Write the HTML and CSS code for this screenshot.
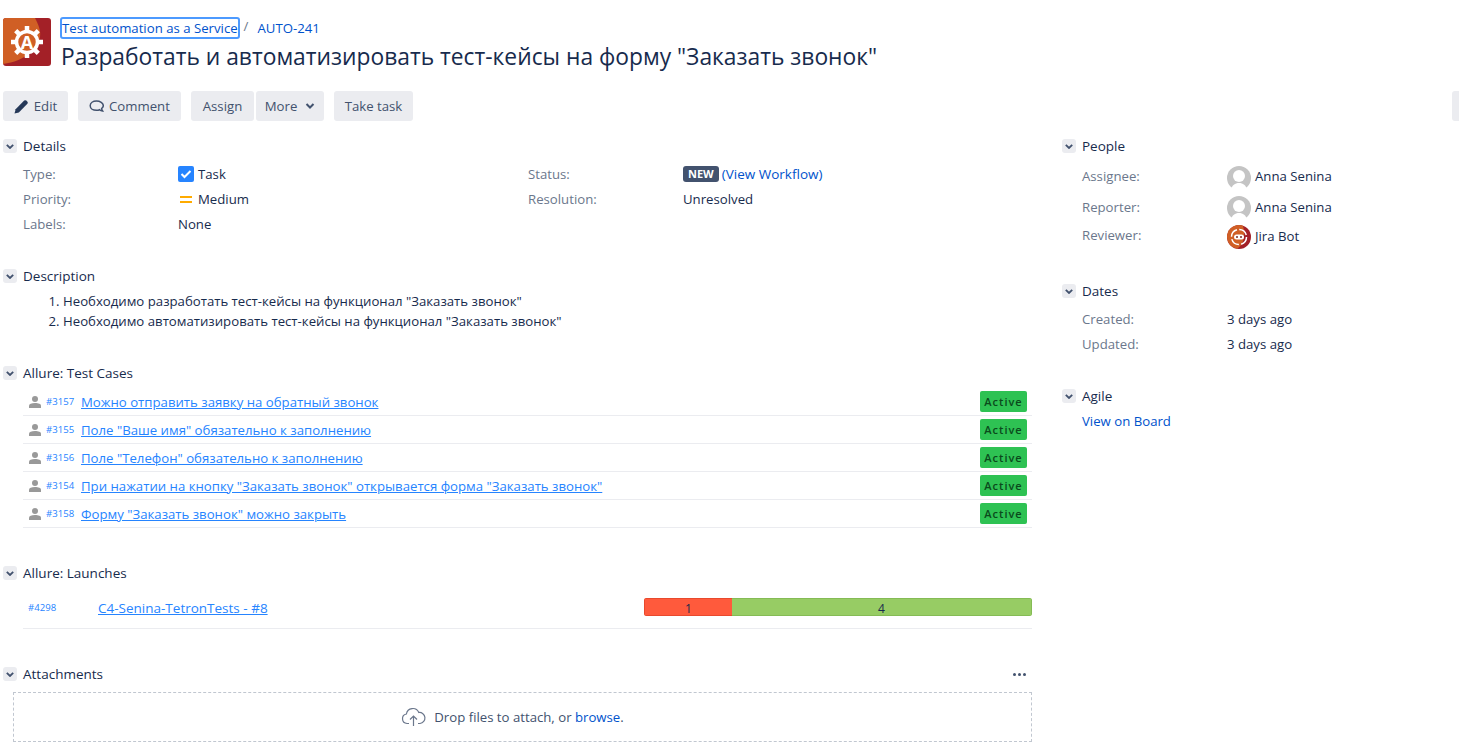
FILE: index.html
```html
<!DOCTYPE html>
<html lang="ru">
<head>
<meta charset="utf-8">
<title>AUTO-241</title>
<link rel="stylesheet" href="styles.css">
</head>
<body>
<header class="issue-header">
  <svg class="project-logo" viewBox="0 0 48 48" width="48" height="48">
    <rect width="48" height="48" rx="3" fill="#a32027"/>
    <path d="M0 3a3 3 0 0 1 3-3h29c3 6 6 12 5 19-2 12-15 24-37 27z" fill="#d05f25"/>
    <g fill="none" stroke="#fff">
      <circle cx="24" cy="24" r="10.500" stroke-width="3.500"/>
      <path stroke-width="4.500" d="M24 8v5M24 35v5M8 24h5M35 24h5M12.700 12.700l3.500 3.500M31.800 31.800l3.500 3.500M12.700 35.300l3.500-3.500M31.800 16.200l3.500-3.500"/>
    </g>
    <text x="24" y="30.500" class="logo-letter">A</text>
  </svg>
  <div class="header-text">
    <nav class="crumbs">
      <a class="crumb-focus">Test automation as a Service</a>
      <span class="crumb-sep">/</span>
      <a class="crumb-key">AUTO-241</a>
    </nav>
    <h1>Разработать и автоматизировать тест-кейсы на форму "Заказать звонок"</h1>
  </div>
</header>

<div class="toolbar">
  <button class="btn btn-edit"><svg width="15" height="15" viewBox="0 0 14 14"><path d="M0.500 13.500l1-4L9.500 1.500a1.500 1.500 0 0 1 2 0l1 1a1.500 1.500 0 0 1 0 2L4.500 12.500z" fill="#253858"/></svg>Edit</button>
  <button class="btn btn-comment"><svg width="15" height="14" viewBox="0 0 15 14"><path d="M7.500 2C4 2 1.200 3.900 1.200 6.700s2.800 4.600 6.300 4.600c1.200 0 2.200-.2 3.100-.6.800.8 1.700 1.200 3 1.300-.6-.8-.9-1.500-1-2.500 1-.8 1.700-1.700 1.700-2.800C14.300 3.900 11 2 7.500 2z" fill="none" stroke="#42526e" stroke-width="1.500"/></svg>Comment</button>
  <div class="btn-group">
    <button class="btn btn-assign">Assign</button>
    <button class="btn btn-more">More<svg width="10" height="6" viewBox="0 0 10 6"><path d="M1.500 1L5 4.500 8.500 1" fill="none" stroke="#42526e" stroke-width="2"/></svg></button>
  </div>
  <button class="btn btn-take">Take task</button>
  <span class="toolbar-edge"></span>
</div>

<main class="columns">
  <div class="col-main">
    <section class="module mod-details">
      <h2 class="mod-head"><span class="toggle"><svg width="8" height="5" viewBox="0 0 8 5"><path d="M.8.800L4 4 7.200.8" fill="none" stroke="#42526e" stroke-width="1.800"/></svg></span>Details</h2>
      <div class="details-grid">
        <span class="lbl">Type:</span><span class="val"><svg class="ico-task" width="16" height="16" viewBox="0 0 16 16"><rect width="16" height="16" rx="2" fill="#2684ff"/><path d="M3.500 8l3 3 6-6" fill="none" stroke="#fff" stroke-width="2"/></svg>Task</span>
        <span class="lbl">Status:</span><span class="val"><b class="lozenge">NEW</b> <a class="link workflow">(View Workflow)</a></span>
        <span class="lbl">Priority:</span><span class="val"><svg class="ico-task" width="16" height="16" viewBox="0 0 16 16"><path d="M2 5h12v2H2zM2 10h12v2H2z" fill="#ffab00"/></svg>Medium</span>
        <span class="lbl">Resolution:</span><span class="val">Unresolved</span>
        <span class="lbl">Labels:</span><span class="val">None</span>
      </div>
    </section>

    <section class="module mod-desc">
      <h2 class="mod-head"><span class="toggle"><svg width="8" height="5" viewBox="0 0 8 5"><path d="M.8.800L4 4 7.200.8" fill="none" stroke="#42526e" stroke-width="1.800"/></svg></span>Description</h2>
      <ol class="desc-list">
        <li>Необходимо разработать тест-кейсы на функционал "Заказать звонок"</li>
        <li>Необходимо автоматизировать тест-кейсы на функционал "Заказать звонок"</li>
      </ol>
    </section>

    <section class="module mod-cases">
      <h2 class="mod-head"><span class="toggle"><svg width="8" height="5" viewBox="0 0 8 5"><path d="M.8.800L4 4 7.200.8" fill="none" stroke="#42526e" stroke-width="1.800"/></svg></span>Allure: Test Cases</h2>
      <ul class="cases">
        <li class="case"><svg class="person" width="12" height="12" viewBox="0 0 12 12"><circle cx="6" cy="3" r="3" fill="#999"/><path d="M0 12V9.500C0 8 2.500 7 6 7s6 1 6 2.500V12z" fill="#999"/></svg><span class="case-id">#3157</span><a class="case-link">Можно отправить заявку на обратный звонок</a><span class="badge">Active</span></li>
        <li class="case"><svg class="person" width="12" height="12" viewBox="0 0 12 12"><circle cx="6" cy="3" r="3" fill="#999"/><path d="M0 12V9.500C0 8 2.500 7 6 7s6 1 6 2.500V12z" fill="#999"/></svg><span class="case-id">#3155</span><a class="case-link">Поле "Ваше имя" обязательно к заполнению</a><span class="badge">Active</span></li>
        <li class="case"><svg class="person" width="12" height="12" viewBox="0 0 12 12"><circle cx="6" cy="3" r="3" fill="#999"/><path d="M0 12V9.500C0 8 2.500 7 6 7s6 1 6 2.500V12z" fill="#999"/></svg><span class="case-id">#3156</span><a class="case-link">Поле "Телефон" обязательно к заполнению</a><span class="badge">Active</span></li>
        <li class="case"><svg class="person" width="12" height="12" viewBox="0 0 12 12"><circle cx="6" cy="3" r="3" fill="#999"/><path d="M0 12V9.500C0 8 2.500 7 6 7s6 1 6 2.500V12z" fill="#999"/></svg><span class="case-id">#3154</span><a class="case-link">При нажатии на кнопку "Заказать звонок" открывается форма "Заказать звонок"</a><span class="badge">Active</span></li>
        <li class="case"><svg class="person" width="12" height="12" viewBox="0 0 12 12"><circle cx="6" cy="3" r="3" fill="#999"/><path d="M0 12V9.500C0 8 2.500 7 6 7s6 1 6 2.500V12z" fill="#999"/></svg><span class="case-id">#3158</span><a class="case-link">Форму "Заказать звонок" можно закрыть</a><span class="badge">Active</span></li>
      </ul>
    </section>

    <section class="module mod-launches">
      <h2 class="mod-head"><span class="toggle"><svg width="8" height="5" viewBox="0 0 8 5"><path d="M.8.800L4 4 7.200.8" fill="none" stroke="#42526e" stroke-width="1.800"/></svg></span>Allure: Launches</h2>
      <div class="launch">
        <span class="launch-id">#4298</span>
        <a class="launch-link">C4-Senina-TetronTests - #8</a>
        <div class="launch-bar"><span class="bar-fail">1</span><span class="bar-pass">4</span></div>
      </div>
    </section>

    <section class="module mod-attach">
      <h2 class="mod-head"><span class="toggle"><svg width="8" height="5" viewBox="0 0 8 5"><path d="M.8.800L4 4 7.200.8" fill="none" stroke="#42526e" stroke-width="1.800"/></svg></span>Attachments<span class="dots"><i></i><i></i><i></i></span></h2>
      <div class="dropzone"><svg width="25" height="20" viewBox="0 0 25 20"><path d="M8 16.500H6a4.800 4.800 0 0 1-.6-9.500A6.500 6.500 0 0 1 17.800 5.500 5.500 5.500 0 0 1 19 16.500h-2" fill="none" stroke="#6b778c" stroke-width="1.200"/><path d="M12.500 19V9M9 12.500l3.500-3.500 3.500 3.500" fill="none" stroke="#6b778c" stroke-width="1.200"/></svg><span>Drop files to attach, or <a class="link">browse</a>.</span></div>
    </section>
  </div>

  <aside class="col-side">
    <section class="module mod-people">
      <h2 class="mod-head"><span class="toggle"><svg width="8" height="5" viewBox="0 0 8 5"><path d="M.8.800L4 4 7.200.8" fill="none" stroke="#42526e" stroke-width="1.800"/></svg></span>People</h2>
      <div class="side-row row-assignee"><span class="side-lbl">Assignee:</span><span class="side-user"><svg class="avatar" width="24" height="24" viewBox="0 0 24 24"><circle cx="12" cy="12" r="12" fill="#c4c4c4"/><circle cx="12" cy="10" r="6" fill="#fff"/><path d="M4 24c1-5 4-7 8-7s7 2 8 7z" fill="#fff"/></svg>Anna Senina</span></div>
      <div class="side-row row-reporter"><span class="side-lbl">Reporter:</span><span class="side-user"><svg class="avatar" width="24" height="24" viewBox="0 0 24 24"><circle cx="12" cy="12" r="12" fill="#c4c4c4"/><circle cx="12" cy="10" r="6" fill="#fff"/><path d="M4 24c1-5 4-7 8-7s7 2 8 7z" fill="#fff"/></svg>Anna Senina</span></div>
      <div class="side-row row-reviewer"><span class="side-lbl">Reviewer:</span><span class="side-user"><svg class="avatar" width="24" height="24" viewBox="0 0 24 24"><circle cx="12" cy="12" r="12" fill="#a32027"/><path d="M12 0a12 12 0 0 0-12 12 12 12 0 0 0 10 11.800C16 20 19 12 16 .7A12 12 0 0 0 12 0z" fill="#d05f25"/><circle cx="12" cy="12" r="7.500" fill="none" stroke="#fff" stroke-width="1.500" stroke-dasharray="9.500 2.280"/><rect x="7" y="9.500" width="10" height="5" rx="2.500" fill="#fff"/><circle cx="10" cy="12" r="1" fill="#7a2a20"/><circle cx="14" cy="12" r="1" fill="#7a2a20"/></svg>Jira Bot</span></div>
    </section>
    <section class="module mod-dates">
      <h2 class="mod-head"><span class="toggle"><svg width="8" height="5" viewBox="0 0 8 5"><path d="M.8.800L4 4 7.200.8" fill="none" stroke="#42526e" stroke-width="1.800"/></svg></span>Dates</h2>
      <div class="side-row date-row"><span class="side-lbl">Created:</span><span class="side-val">3 days ago</span></div>
      <div class="side-row date-row"><span class="side-lbl">Updated:</span><span class="side-val">3 days ago</span></div>
    </section>
    <section class="module mod-agile">
      <h2 class="mod-head"><span class="toggle"><svg width="8" height="5" viewBox="0 0 8 5"><path d="M.8.800L4 4 7.200.8" fill="none" stroke="#42526e" stroke-width="1.800"/></svg></span>Agile</h2>
      <a class="link agile-link">View on Board</a>
    </section>
  </aside>
</main>
</body>
</html>
```
FILE: styles.css
```css
* { box-sizing: border-box; }
html, body { margin: 0; padding: 0; height: 755px; overflow: hidden; }
body {
  background: #fff;
  color: #172b4d;
  font-family: "Open Sans", "Noto Sans", sans-serif;
  font-size: 13.2px;
  line-height: 20px;
}
a { color: #0052cc; text-decoration: none; }
.link { color: #0052cc; }

.issue-header { display: flex; padding: 18px 0 0 3px; height: 91px; }
.project-logo { flex: none; }
.logo-letter { font: bold 18px "Open Sans", sans-serif; fill: #fff; text-anchor: middle; }
.header-text { margin-left: 10px; margin-top: -1px; }
.crumbs { display: flex; align-items: center; height: 22px; margin-left: -1px; }
.crumb-focus { border: 2px solid #4c9aff; border-radius: 3px; height: 22px; line-height: 18px; }
.crumb-sep { color: #6b778c; margin: -4px 9px 0 4px; }
h1 { margin: 2px 0 0; font-size: 22.8px; line-height: 32px; font-weight: 500; color: #172b4d; white-space: nowrap; }

.toolbar { display: flex; height: 30px; position: relative; padding-left: 3px; }
.btn {
  display: flex; align-items: center; justify-content: center;
  height: 30px; border: 0; padding: 0; border-radius: 3px;
  background: #ebecf0; color: #42526e;
  font: inherit;
}
.btn-edit { width: 65px; gap: 5px; margin-right: 10px; }
.btn-comment { width: 103px; gap: 5px; margin-right: 10px; }
.btn-group { display: flex; gap: 2px; margin-right: 10px; }
.btn-assign { width: 63px; }
.btn-more { width: 68px; gap: 8px; }
.btn-take { width: 79px; }
.toolbar-edge { position: absolute; right: 0; top: 0; width: 7px; height: 30px; background: #ebecf0; border-radius: 3px 0 0 3px; }

.columns { display: flex; padding-left: 3px; }
.col-main { width: 1029px; flex: none; }
.col-side { margin-left: 30px; width: 300px; flex: none; }

.module { position: relative; }
.mod-head {
  display: flex; align-items: center; margin: 0; height: 20px;
  font-size: 13.5px; font-weight: 500; color: #172b4d; line-height: 20px;
}
.toggle {
  display: flex; align-items: center; justify-content: center;
  flex: none; width: 14px; height: 14px; margin-right: 6px;
  background: #ebecf0; border-radius: 3px;
}

.mod-details { padding-top: 15px; }
.details-grid {
  display: grid; grid-template-columns: 155px 350px 155px 1fr;
  grid-auto-rows: 25px; padding: 8px 0 0 20px;
}
.lbl { color: #6b778c; }
.val { display: flex; align-items: flex-start; }
.ico-task { margin: 2px 4px 0 0; flex: none; }
.lozenge {
  display: inline-block; background: #42526e; color: #fff; border-radius: 3px;
  font-size: 11px; line-height: 16px; height: 16px; padding: 0 5px; margin: 2px 3px 0 0; font-weight: 700;
}
.workflow { font-size: 13.5px; }
.mod-desc { margin-top: 7px; padding-top: 20px; }
.desc-list { margin: 5px 0 0; padding: 0 0 0 60px; line-height: 20px; }
.desc-list li { height: 20px; }

.mod-cases { margin-top: 32px; }
.cases { list-style: none; margin: 5px 0 0 20px; padding: 0; }
.case { display: flex; align-items: center; height: 28px; padding-right: 5px; border-bottom: 1px solid #ebecf0; }
.person { margin: 0 5px 0 6px; flex: none; }
.case-id { font-size: 9.6px; color: #2684ff; width: 35px; flex: none; margin-top: 1px; }
.case-link { color: #2684ff; text-decoration: underline; }
.badge {
  margin-left: auto; width: 47px; height: 21px; background: #2ec253; border-radius: 2px;
  color: #0a4a1c; font-size: 11px; letter-spacing: 1px; font-weight: 600; text-align: center; line-height: 21px;
}

.mod-launches { margin-top: 35px; }
.launch { display: flex; align-items: center; height: 46px; margin: 0 0 0 20px; border-bottom: 1px solid #ebecf0; padding: 3px 0 0 5px; }
.launch-id { font-size: 9.6px; color: #2684ff; width: 70px; flex: none; margin-top: 2px; }
.launch-link { color: #2684ff; text-decoration: underline; font-size: 13.5px; margin-top: 2px; }
.launch-bar { margin-left: auto; width: 388px; height: 18px; display: flex; border-radius: 3px; overflow: hidden; font-size: 12px; text-align: center; color: #172b4d; }
.bar-fail { width: 88px; background: #ff5a3c; border: solid #e8492d; border-width: 1px 0 1px 1px; line-height: 19px; }
.bar-pass { flex: 1; background: #97cc64; border: solid #85bb55; border-width: 1px 1px 1px 0; line-height: 19px; }

.mod-attach { margin-top: 35px; }
.dots { margin-left: auto; margin-right: 6px; display: flex; gap: 2px; }
.dots i { width: 3px; height: 3px; border-radius: 50%; background: #42526e; }
.dropzone {
  display: flex; align-items: center; justify-content: center; gap: 8px;
  margin: 8px 0 0 10px; height: 50px; padding-right: 20px; border: 1px dashed #c1c7d0; color: #42526e;
}

.mod-people { padding-top: 15px; }
.side-row { display: flex; padding-left: 20px; }
.side-lbl { width: 145px; flex: none; color: #6b778c; }
.side-user { display: flex; align-items: flex-start; height: 24px; line-height: 21px; }
.avatar { margin-right: 4px; flex: none; }
.row-assignee { margin-top: 10px; height: 30px; }
.row-reporter { height: 29px; }
.row-reporter .side-lbl { margin-top: 1px; }
.row-reporter .side-user, .row-reviewer .side-user { line-height: 23px; }
.row-reviewer { height: 24px; }
.mod-dates { margin-top: 32px; }
.date-row { height: 25px; }
.mod-dates .date-row:first-of-type { margin-top: 8px; }
.mod-agile { margin-top: 27px; }
.agile-link { display: block; margin: 5px 0 0 20px; }
```
